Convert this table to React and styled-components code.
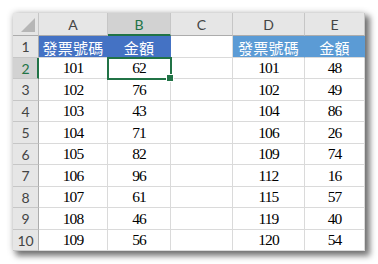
import React from "react";
import styled, { createGlobalStyle, css } from "styled-components";

const Global = createGlobalStyle`
  html, body { margin: 0; padding: 0; background: #ffffff; }
  body { width: 378px; height: 264px; overflow: hidden; }
`;

const Page = styled.div`
  padding: 13px 0 0 13px;
`;

const Sheet = styled.div`
  position: relative;
  width: 352px;
  height: 238px;
  background: #ffffff;
  box-shadow: 4px 4px 6px 1px rgba(0, 0, 0, 0.5), 0 0 7px rgba(0, 0, 0, 0.2);
`;

const Grid = styled.div`
  display: grid;
  grid-template-columns: 26px 69px 63px 62px 72px 60px;
  grid-template-rows: 23px 22px 21px 22px 21px 22px 21px 22px 21px 22px 21px;
`;

const headFont = css`
  font-family: Lato, "Liberation Sans", sans-serif;
  font-size: 14px;
  color: #444444;
`;

const Corner = styled.div`
  position: relative;
  background: #e6e6e6;
  border-right: 1px solid #c6c6c6;
  border-bottom: 1px solid #acacac;
  box-sizing: border-box;
  &::after {
    content: "";
    position: absolute;
    right: 3px;
    bottom: 3px;
    width: 0;
    height: 0;
    border-left: 14px solid transparent;
    border-bottom: 14px solid #b6b6b6;
  }
`;

const ColHead = styled.div`
  ${headFont};
  display: flex;
  align-items: center;
  justify-content: center;
  box-sizing: border-box;
  background: ${(p) => (p.$selected ? "#d2d2d2" : "#e6e6e6")};
  color: ${(p) => (p.$selected ? "#217346" : "#444444")};
  border-right: 1px solid #c6c6c6;
  border-bottom: ${(p) => (p.$selected ? "2px solid #217346" : "1px solid #acacac")};
  padding-top: ${(p) => (p.$selected ? "1px" : "0")};
`;

const RowHead = styled.div`
  ${headFont};
  display: flex;
  align-items: center;
  justify-content: center;
  box-sizing: border-box;
  background: ${(p) => (p.$selected ? "#d2d2d2" : "#e6e6e6")};
  color: ${(p) => (p.$selected ? "#217346" : "#444444")};
  border-right: ${(p) => (p.$selected ? "2px solid #217346" : "1px solid #acacac")};
  border-bottom: 1px solid #c6c6c6;
  padding-left: ${(p) => (p.$selected ? "1px" : "0")};
`;

const fills = {
  dark: "#4472c4",
  light: "#5b9bd5",
};

const Cell = styled.div`
  display: flex;
  align-items: center;
  justify-content: center;
  box-sizing: border-box;
  font-family: "Liberation Serif", "Noto Sans CJK TC", serif;
  font-size: 15.5px;
  letter-spacing: -0.9px;
  color: #000000;
  border-right: 1px solid #dadada;
  border-bottom: 1px solid #dadada;
  background: #ffffff;
  ${(p) =>
    p.$fill &&
    css`
      background: ${fills[p.$fill]};
      border-right-color: ${fills[p.$fill]};
      color: #ffffff;
      font-family: "Noto Sans CJK TC", serif;
      font-size: 15px;
      letter-spacing: 0.3px;
      padding-top: 1px;
    `}
`;

const Selection = styled.div`
  position: absolute;
  left: 94px;
  top: 44px;
  width: 65px;
  height: 23px;
  box-sizing: border-box;
  border: 2px solid #217346;
  pointer-events: none;
`;

const Handle = styled.div`
  position: absolute;
  right: -4px;
  bottom: -4px;
  width: 6px;
  height: 6px;
  background: #217346;
  border: 1px solid #ffffff;
`;

const cols = ["A", "B", "C", "D", "E"];
const left = [
  [101, 62],
  [102, 76],
  [103, 43],
  [104, 71],
  [105, 82],
  [106, 96],
  [107, 61],
  [108, 46],
  [109, 56],
];
const right = [
  [101, 48],
  [102, 49],
  [104, 86],
  [106, 26],
  [109, 74],
  [112, 16],
  [115, 57],
  [119, 40],
  [120, 54],
];

export default function App() {
  return (
    <>
      <Global />
      <Page>
        <Sheet>
          <Grid>
            <Corner />
            {cols.map((c) => (
              <ColHead key={c} $selected={c === "B"}>
                {c}
              </ColHead>
            ))}
            <RowHead>1</RowHead>
            <Cell $fill="dark">發票號碼</Cell>
            <Cell $fill="dark">金額</Cell>
            <Cell />
            <Cell $fill="light">發票號碼</Cell>
            <Cell $fill="light">金額</Cell>
            {left.map((row, i) => (
              <React.Fragment key={i}>
                <RowHead $selected={i === 0}>{i + 2}</RowHead>
                <Cell>{row[0]}</Cell>
                <Cell>{row[1]}</Cell>
                <Cell />
                <Cell>{right[i][0]}</Cell>
                <Cell>{right[i][1]}</Cell>
              </React.Fragment>
            ))}
          </Grid>
          <Selection>
            <Handle />
          </Selection>
        </Sheet>
      </Page>
    </>
  );
}
